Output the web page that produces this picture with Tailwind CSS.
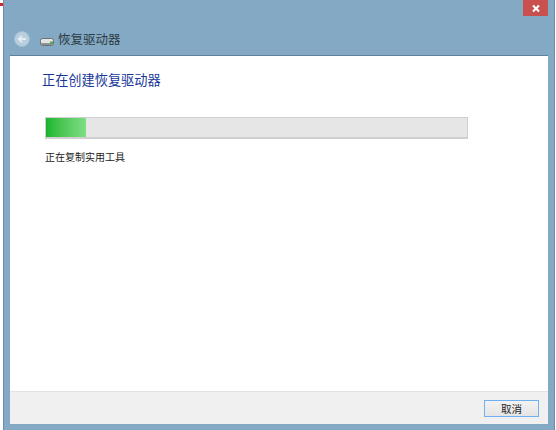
<!DOCTYPE html>
<html lang="zh">
<head>
<meta charset="utf-8">
<script src="https://cdn.jsdelivr.net/npm/@tailwindcss/browser@4"></script>
</head>
<body class="w-[556px] h-[430px] overflow-hidden bg-white font-['Noto_Sans_CJK_SC','Noto_Sans',sans-serif]">
<div class="relative w-[556px] h-[430px] flex pl-[3px] pr-px">
  <div class="absolute left-0 top-[3px] w-[3px] h-[3px] bg-[#d8232a]"></div>
  <div class="flex-1 h-full flex flex-col bg-[#84a9c4] border-x border-x-[#6f8ca6] pl-1.5 pr-1.5">
    <div class="h-4 flex justify-end shrink-0">
      <div class="w-[25px] h-4 bg-[#c8504f] flex items-center justify-center">
        <svg width="10" height="9" viewBox="0 0 10 9"><path d="M2 1.500 8 7.500M8 1.500 2 7.500" stroke="#fff" stroke-width="2"/></svg>
      </div>
    </div>
    <div class="h-[39px] shrink-0 flex items-start pl-[4px] pt-[15px]">
      <svg width="16" height="16" viewBox="0 0 16 16" class="shrink-0">
        <circle cx="8" cy="8" r="7.500" fill="#b9cfdf" stroke="#a4bdd0"/>
        <path d="M12 8H5M8 4.800 4.800 8 8 11.200" fill="none" stroke="#e6eef4" stroke-width="1.800"/>
      </svg>
      <svg width="14" height="8" viewBox="0 0 14 8" class="ml-[10px] shrink-0 mt-[7px]">
        <rect x=".5" y=".5" width="13" height="7" rx="2" fill="#e4e4e2" stroke="#6a7073"/>
        <rect x="1" y="5" width="12" height="2" fill="#8d9396"/>
        <rect x="10" y="3.500" width="3" height="2" fill="#4da83c"/>
      </svg>
      <span class="ml-[4px] text-[12.500px] leading-4 text-[#2c3a42]">恢复驱动器</span>
    </div>
    <div class="w-[538px] h-[369px] shrink-0 bg-white flex flex-col border-t border-t-[#5f7f9a]">
      <div class="flex-1 pl-8 pr-20 pt-[15px]">
        <h1 class="text-[13.200px] leading-[18px] font-normal text-[#17379b]">正在创建恢复驱动器</h1>
        <div class="ml-[3px] mt-[28px] w-[423px] h-[22px] bg-[#e6e6e6] border border-[#d0d0d0] border-b-2">
          <div class="w-[40px] h-full bg-gradient-to-r from-[#13b52c] to-[#7ede84]"></div>
        </div>
        <p class="ml-[3px] mt-[10px] text-[10px] leading-4 text-[#1a1a1a]">正在复制实用工具</p>
      </div>
      <div class="h-[33px] shrink-0 bg-[#f0f0f0] border-t border-t-[#e2e2e2] flex items-start justify-end pt-2 pr-[9px]">
        <button class="w-[55px] h-[17px] border border-[#6eb0f0] bg-gradient-to-b from-[#f2f2f2] to-[#e5e5e5] text-[10.500px] leading-[15px] text-[#222]">取消</button>
      </div>
    </div>
    <div class="flex-1"></div>
  </div>
</div>
</body>
</html>
